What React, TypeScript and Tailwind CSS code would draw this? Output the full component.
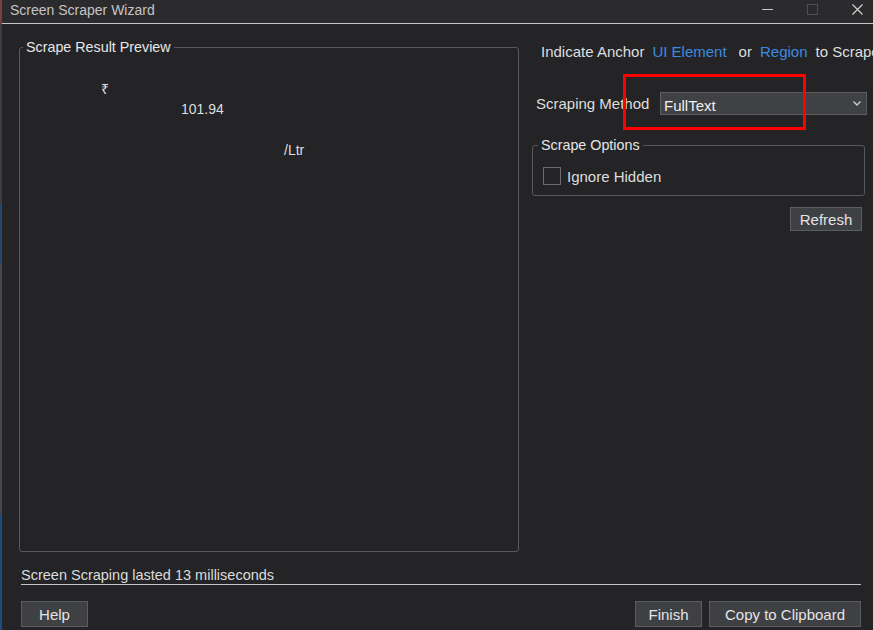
import React from 'react';

const font = { fontFamily: '"Segoe UI", "Liberation Sans", Arial, sans-serif' };

function WinButton({ children, className = '' }: { children: React.ReactNode; className?: string }) {
  return (
    <button
      className={`h-[26px] border border-[#5b5d61] bg-[#3e4044] text-[15px] leading-none text-[#e4e4e4] ${className}`}
    >
      {children}
    </button>
  );
}

function TitleControls() {
  return (
    <div className="flex items-start gap-[34px] pt-[4px] pr-[10px]">
      <svg width="11" height="11" viewBox="0 0 11 11">
        <line x1="0" y1="5.5" x2="11" y2="5.5" stroke="#c8c8c8" strokeWidth="1" />
      </svg>
      <svg width="11" height="11" viewBox="0 0 11 11">
        <rect x="0.5" y="0.5" width="10" height="10" fill="none" stroke="#4f4f52" strokeWidth="1" />
      </svg>
      <svg width="11" height="11" viewBox="0 0 11 11">
        <path d="M0.5 0.5 L10.5 10.5 M10.5 0.5 L0.5 10.5" stroke="#d0d0d0" strokeWidth="1.2" />
      </svg>
    </div>
  );
}

export default function App() {
  return (
    <div className="flex h-[630px] w-[873px] overflow-hidden bg-[#242426] text-[#dedede]" style={font}>
      {/* sliver of the window behind */}
      <div className="flex w-[2px] flex-col">
        <div className="h-[24px] bg-[#7a4040]" />
        <div className="h-[180px] bg-[#3a3d42]" />
        <div className="h-[60px] bg-[#27466e]" />
        <div className="h-[250px] bg-[#45484d]" />
        <div className="flex-1 bg-[#1f4a7e]" />
      </div>

      <div className="flex min-w-0 flex-1 flex-col">
        {/* Title bar */}
        <div className="flex h-[24px] shrink-0 items-start justify-between border-b border-[#c6c6c6] bg-[#2b2b2e]">
          <span className="pl-[8px] pt-[2px] text-[14px] leading-[17px] text-[#c4c4c4]">Screen Scraper Wizard</span>
          <TitleControls />
        </div>

        {/* Body */}
        <div className="flex">
          <fieldset className="ml-[17px] mt-[14px] h-[514px] w-[500px] shrink-0 rounded-[3px] border border-[#58595c]">
            <legend className="ml-[3px] px-[3px] text-[14.3px] leading-[18px] text-[#e6e6e6]">Scrape Result Preview</legend>
            <div className="mt-[23px] pl-[81px] text-[14px] leading-[20px]">₹</div>
            <div className="pl-[161px] text-[14px] leading-[20px]">101.94</div>
            <div className="mt-[21px] pl-[264px] text-[14px] leading-[20px]">/Ltr</div>
          </fieldset>

          <div className="flex min-w-0 flex-1 flex-col pl-[13px] pr-[8px]">
            <div className="mt-[18px] flex whitespace-nowrap pl-[9px] text-[15px] leading-[20px]">
              <span>Indicate Anchor</span>
              <span className="ml-[8px] text-[#3d8be0]">UI Element</span>
              <span className="ml-[12px]">or</span>
              <span className="ml-[8px] text-[#3d8be0]">Region</span>
              <span className="ml-[8px]">to Scrape</span>
            </div>

            <div className="relative mt-[30px] flex items-center">
              <span className="w-[128px] shrink-0 pl-[4px] text-[15px] leading-[20px]">Scraping Method</span>
              <div className="flex h-[23px] w-[207px] shrink-0 items-center justify-between border border-[#5b5d61] bg-[#3f4145] pl-[3px] pr-[5px]">
                <span className="pt-[4px] text-[15px] leading-none text-[#f0f0f0]">FullText</span>
                <svg width="8" height="5" viewBox="0 0 8 5">
                  <polyline points="0.5,0.5 4,4 7.5,0.5" fill="none" stroke="#cfcfcf" strokeWidth="1.3" />
                </svg>
              </div>
              <div className="absolute left-[91px] top-[-18px] h-[56px] w-[183px] border-[3px] border-[#ff0000]" />
            </div>

            <fieldset className="mt-[21px] h-[60px] rounded-[3px] border border-[#58595c]">
              <legend className="ml-[5px] px-[3px] text-[14.3px] leading-[18px] text-[#e6e6e6]">Scrape Options</legend>
              <div className="mt-[12px] flex items-center pl-[10px]">
                <div className="h-[18px] w-[18px] border border-[#6a6b6e]" />
                <span className="ml-[6px] pt-[2px] text-[15px] leading-[18px]">Ignore Hidden</span>
              </div>
            </fieldset>

            <div className="mt-[11px] flex justify-end pr-[3px]">
              <button className="h-[24px] w-[72px] border border-[#5b5d61] bg-[#3e4044] text-[15px] leading-none text-[#e4e4e4]">
                Refresh
              </button>
            </div>
          </div>
        </div>

        {/* Status */}
        <div className="ml-[19px] mr-[12px] mt-[15px] border-b border-[#c6c6c6] text-[14.5px] leading-[17px] text-[#dcdcdc]">
          Screen Scraping lasted 13 milliseconds
        </div>

        {/* Buttons */}
        <div className="mt-[16px] flex items-center pl-[19px] pr-[12px]">
          <WinButton className="w-[67px]">Help</WinButton>
          <div className="flex-1" />
          <WinButton className="w-[67px]">Finish</WinButton>
          <WinButton className="ml-[7px] w-[152px]">Copy to Clipboard</WinButton>
        </div>
      </div>
    </div>
  );
}
